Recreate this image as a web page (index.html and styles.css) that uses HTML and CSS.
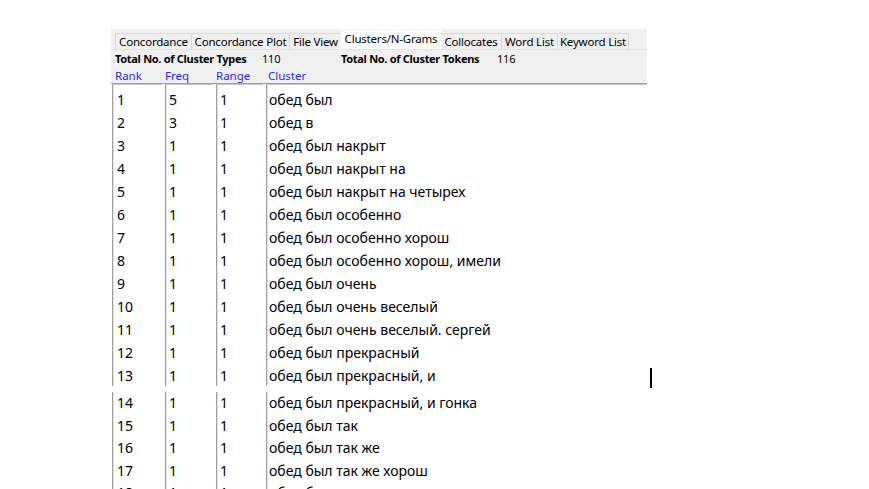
FILE: index.html
```html
<!DOCTYPE html>
<html lang="ru">
<head>
<meta charset="utf-8">
<title>Clusters/N-Grams</title>
<link rel="stylesheet" href="styles.css">
</head>
<body>
<div class="app">
  <div class="top">
    <div class="tabs">
      <div class="tab t1">Concordance</div>
      <div class="tab t2">Concordance Plot</div>
      <div class="tab t3">File View</div>
      <div class="tab t4 active">Clusters/N-Grams</div>
      <div class="tab t5">Collocates</div>
      <div class="tab t6">Word List</div>
      <div class="tab t7">Keyword List</div>
    </div>
    <div class="stats">
      <span class="lbl">Total No. of Cluster Types</span>
      <span class="val">110</span>
      <span class="lbl">Total No. of Cluster Tokens</span>
      <span class="val">116</span>
    </div>
    <div class="heads">
      <span>Rank</span><span>Freq</span><span>Range</span><span>Cluster</span>
    </div>
  </div>
  <div class="block first">
    <div class="col c-rank"><div>1</div><div>2</div><div>3</div><div>4</div><div>5</div><div>6</div><div>7</div><div>8</div><div>9</div><div>10</div><div>11</div><div>12</div><div>13</div></div>
    <div class="col c-freq"><div>5</div><div>3</div><div>1</div><div>1</div><div>1</div><div>1</div><div>1</div><div>1</div><div>1</div><div>1</div><div>1</div><div>1</div><div>1</div></div>
    <div class="col c-range"><div>1</div><div>1</div><div>1</div><div>1</div><div>1</div><div>1</div><div>1</div><div>1</div><div>1</div><div>1</div><div>1</div><div>1</div><div>1</div></div>
    <div class="col c-cluster">
      <div>обед был</div>
      <div>обед в</div>
      <div>обед был накрыт</div>
      <div>обед был накрыт на</div>
      <div>обед был накрыт на четырех</div>
      <div>обед был особенно</div>
      <div>обед был особенно хорош</div>
      <div>обед был особенно хорош, имели</div>
      <div>обед был очень</div>
      <div>обед был очень веселый</div>
      <div>обед был очень веселый. сергей</div>
      <div>обед был прекрасный</div>
      <div>обед был прекрасный, и</div>
    </div>
  </div>
  <div class="block second">
    <div class="col c-rank"><div>14</div><div>15</div><div>16</div><div>17</div><div>18</div></div>
    <div class="col c-freq"><div>1</div><div>1</div><div>1</div><div>1</div><div>1</div></div>
    <div class="col c-range"><div>1</div><div>1</div><div>1</div><div>1</div><div>1</div></div>
    <div class="col c-cluster">
      <div>обед был прекрасный, и гонка</div>
      <div>обед был так</div>
      <div>обед был так же</div>
      <div>обед был так же хорош</div>
      <div>обед был так же хорош</div>
    </div>
  </div>
  <div class="cursor"></div>
</div>
</body>
</html>
```
FILE: styles.css
```css
html, body {
  margin: 0;
  padding: 0;
  background: #ffffff;
  height: 489px;
  overflow: hidden;
}
body {
  font-family: "Noto Sans", "Open Sans", sans-serif;
  color: #000;
}
.app {
  position: relative;
  margin: 29px 0 0 111px;
  width: 536px;
}
.top {
  background: #f0f0f0;
  border-bottom: 1px solid #a0a0a0;
  height: 54px;
}
.tabs {
  display: flex;
  align-items: flex-end;
  height: 20px;
  padding-left: 4px;
}
.tab {
  box-sizing: border-box;
  height: 16px;
  font-size: 11.5px;
  line-height: 15px;
  text-align: center;
  border: 1px solid #d9d9d9;
  border-bottom: none;
  border-right: none;
  white-space: nowrap;
  letter-spacing: -0.2px;
}
.tab.active {
  height: 19px;
  background: #ffffff;
  border: none;
  line-height: 17px;
}
.t1 { width: 76px; }
.t2 { width: 98px; }
.t3 { width: 52px; }
.t4 { width: 100px; }
.t5 { width: 60px; border-left: none; }
.t6 { width: 56px; }
.t7 { width: 72px; border-right: 1px solid #d9d9d9; }
.stats {
  display: grid;
  grid-template-columns: 147px 79px 156px auto;
  padding-left: 4px;
  height: 17px;
  align-items: center;
  font-size: 11px;
  border-top: 1px solid #e4e4e4;
}
.stats .lbl {
  font-weight: bold;
  letter-spacing: -0.3px;
}
.stats .val {
  letter-spacing: -0.2px;
}
.heads {
  display: grid;
  grid-template-columns: 50px 51px 52px auto;
  padding-left: 4px;
  height: 16px;
  align-items: center;
  font-size: 11.5px;
  color: #2a2aff;
}
.block {
  display: grid;
  grid-template-columns: 50px 48px 47px 381px;
  column-gap: 3px;
  padding-left: 1px;
  overflow: hidden;
  font-size: 14px;
}
.col {
  box-sizing: border-box;
  border-left: 1px solid #a0a0a0;
  box-shadow: inset 1px 0 0 #e3e3e3;
  padding-left: 4px;
  white-space: nowrap;
  overflow: hidden;
}
.c-freq, .c-range { padding-left: 3px; }
.c-cluster { padding-left: 2px; }
.first {
  height: 302px;
}
.first .col {
  border-top: 1px solid #c4c4c4;
  padding-top: 3px;
}
.first .col div {
  height: 23px;
  line-height: 23px;
}
.second {
  margin-top: 6px;
  height: 120px;
}
.second .col div {
  height: 22.5px;
  line-height: 22px;
}
.cursor {
  position: absolute;
  left: 539px;
  top: 339px;
  width: 2px;
  height: 20px;
  background: #000;
}
```
